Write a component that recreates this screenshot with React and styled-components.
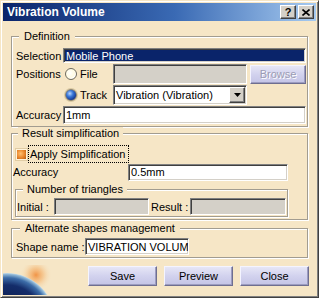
import React from "react";
import styled, { createGlobalStyle } from "styled-components";

const BEIGE = "#f6e6c6";

const GlobalStyle = createGlobalStyle`
  html, body { margin: 0; padding: 0; background: ${BEIGE}; }
  body {
    font-family: "Liberation Sans", Arial, sans-serif;
    font-size: 11px;
    color: #000;
  }
`;

const Window = styled.div`
  position: relative;
  width: 319px;
  height: 298px;
  box-sizing: border-box;
  border: 1px solid;
  border-color: ${BEIGE} #404040 #404040 ${BEIGE};
  box-shadow: inset 1px 1px 0 #fff, inset -1px -1px 0 #808080;
  padding: 2px;
  background: ${BEIGE};
  display: flex;
  flex-direction: column;
  overflow: hidden;
`;

const TitleBar = styled.div`
  height: 18px;
  flex: none;
  display: flex;
  align-items: center;
  padding: 0 2px 0 4px;
  background: linear-gradient(90deg, #0a246a 0%, #3a6ab4 55%, #a6caf0 100%);
  color: #fff;
  font-weight: bold;
  font-size: 12px;
`;

const TitleText = styled.span`
  flex: 1;
  white-space: nowrap;
`;

const CapButton = styled.div`
  box-sizing: border-box;
  width: 16px;
  height: 14px;
  margin-left: ${(p) => (p.gap ? "2px" : "0")};
  background: #d4d0c8;
  border: 1px solid;
  border-color: #fff #404040 #404040 #fff;
  box-shadow: inset -1px -1px 0 #808080;
  display: flex;
  align-items: center;
  justify-content: center;
  color: #000;
  font-size: 11px;
  font-weight: bold;
  line-height: 1;
`;

const Body = styled.div`
  position: relative;
  z-index: 1;
  flex: 1;
  display: flex;
  flex-direction: column;
  padding: 9px 8px 0 8px;
`;

const Group = styled.fieldset`
  margin: ${(p) => p.m || "0"};
  padding: ${(p) => p.pad};
  border: 1px solid #a29c90;
  box-shadow: inset 1px 1px 0 #fff, 1px 1px 0 #fff;
  min-width: 0;
`;

const Legend = styled.legend`
  margin-left: ${(p) => p.indent}px;
  padding: 0 ${(p) => p.pad}px;
  line-height: 13px;
  height: 13px;
  background: ${BEIGE};
  white-space: nowrap;
`;

const DefGrid = styled.div`
  display: grid;
  grid-template-columns: 47px 1fr;
  grid-template-rows: 15px 20px 20px 18px;
  row-gap: 1px;
  align-items: center;
`;

const Label = styled.span`
  white-space: nowrap;
  padding-left: ${(p) => p.indent || 0}px;
  width: ${(p) => (p.w ? p.w + "px" : "auto")};
  flex: none;
`;

const Field = styled.div`
  box-sizing: border-box;
  height: ${(p) => p.h || 17}px;
  width: ${(p) => (p.w ? p.w + "px" : "auto")};
  flex: ${(p) => (p.w ? "none" : "1")};
  border: 1px solid;
  border-color: #808080 #fff #fff #808080;
  box-shadow: inset 1px 1px 0 #404040, inset -1px -1px 0 #d4d0c8;
  background: ${(p) =>
    p.tone === "selected" ? "#0a246a" : p.tone === "disabled" ? "#d4d0c8" : "#fff"};
  color: ${(p) => (p.tone === "selected" ? "#fff" : "#000")};
  padding: 0 2px;
  display: flex;
  align-items: center;
  white-space: nowrap;
  overflow: hidden;
  position: relative;
`;

const ChoiceRow = styled.div`
  display: flex;
  align-items: center;
  height: 100%;
`;

const RadioLabel = styled.label`
  box-sizing: border-box;
  width: 50px;
  flex: none;
  display: flex;
  align-items: center;
  gap: 3px;
  padding-left: 2px;
`;

const Radio = styled.span`
  box-sizing: border-box;
  width: 12px;
  height: 12px;
  border-radius: 50%;
  flex: none;
  border: 1px solid ${(p) => (p.on ? "#8a8270" : "#6e6a5e")};
  background: ${(p) =>
    p.on
      ? "radial-gradient(circle at 38% 35%, #b8d4ff 0%, #3a78d8 35%, #0c2c88 80%, #061850 100%)"
      : "radial-gradient(circle at 40% 40%, #ffffff 0%, #fffbe0 55%, #e8dcb0 100%)"};
  box-shadow: ${(p) => (p.on ? "0 0 0 1px #d8c8a0" : "inset -1px -1px 0 #fff")};
`;

const Combo = styled(Field)`
  padding-right: 20px;
`;

const DropButton = styled.span`
  position: absolute;
  right: 1px;
  top: 1px;
  bottom: 1px;
  width: 16px;
  box-sizing: border-box;
  background: #d4d0c8;
  border: 1px solid;
  border-color: #fff #404040 #404040 #fff;
  box-shadow: inset -1px -1px 0 #808080;
  display: flex;
  align-items: center;
  justify-content: center;
`;

const LavButton = styled.div`
  box-sizing: border-box;
  width: ${(p) => p.w}px;
  height: ${(p) => p.h || 20}px;
  flex: none;
  display: flex;
  align-items: center;
  justify-content: center;
  background: linear-gradient(180deg, #e6e6f6 0%, #d2d2ee 50%, #c4c4e6 100%);
  border: 1px solid;
  border-color: #f4f4ff #6e6e90 #6e6e90 #f4f4ff;
  box-shadow: inset -1px -1px 0 #9c9cc0;
  color: ${(p) => (p.disabled ? "#9c9cb4" : "#000")};
  text-shadow: ${(p) => (p.disabled ? "1px 1px 0 #fff" : "none")};
  margin-left: ${(p) => p.ml || 0}px;
`;

const CheckRow = styled.div`
  display: flex;
  align-items: center;
  height: 18px;
  margin-left: 3px;
`;

const CheckBox = styled.span`
  box-sizing: border-box;
  width: 11px;
  height: 11px;
  flex: none;
  border: 1px solid #fff3dc;
  box-shadow: 0 0 0 1px #e0cca4;
  background: radial-gradient(circle at 40% 40%, #ffc070 0%, #ec8a30 50%, #b85c10 100%);
`;

const FocusLabel = styled.span`
  box-sizing: border-box;
  height: 18px;
  margin-left: 1px;
  padding: 0 3px 0 1px;
  border: 1px dotted #000;
  display: flex;
  align-items: center;
  white-space: nowrap;
`;

const SplitRow = styled.div`
  display: flex;
  align-items: center;
  justify-content: space-between;
  height: 18px;
`;

const CountGrid = styled.div`
  display: grid;
  grid-template-columns: 37px 95px 41px 96px;
  height: 17px;
  align-items: center;
`;

const ShapeRow = styled.div`
  display: flex;
  align-items: center;
  height: 17px;
`;

const ButtonBar = styled.div`
  display: flex;
  justify-content: flex-end;
  gap: 7px;
  margin: 8px -1px 0 0;
`;

const Globe = styled.svg`
  position: absolute;
  left: 2px;
  bottom: 2px;
  z-index: 0;
`;

export default function App() {
  return (
    <>
      <GlobalStyle />
      <Window>
        <TitleBar>
          <TitleText>Vibration Volume</TitleText>
          <CapButton>?</CapButton>
          <CapButton gap>
            <svg width="8" height="7" viewBox="0 0 8 7">
              <path d="M0.5 0.5 L7.5 6.5 M7.5 0.5 L0.5 6.5" stroke="#000" strokeWidth="1.6" />
            </svg>
          </CapButton>
        </TitleBar>

        <Body>
          <Group pad="5px 1px 2px 4px">
            <Legend indent={3} pad={5}>Definition</Legend>
            <DefGrid>
              <Label>Selection</Label>
              <Field h={15} tone="selected">Mobile Phone</Field>

              <Label>Positions</Label>
              <ChoiceRow>
                <RadioLabel>
                  <Radio />
                  File
                </RadioLabel>
                <Field h={20} w={134} tone="disabled" />
                <LavButton w={56} h={19} ml={3} disabled>
                  Browse
                </LavButton>
              </ChoiceRow>

              <span />
              <ChoiceRow>
                <RadioLabel>
                  <Radio on />
                  Track
                </RadioLabel>
                <Combo h={20} w={134}>
                  Vibration (Vibration)
                  <DropButton>
                    <svg width="7" height="4" viewBox="0 0 7 4">
                      <path d="M0 0 H7 L3.5 4 Z" fill="#000" />
                    </svg>
                  </DropButton>
                </Combo>
              </ChoiceRow>

              <Label>Accuracy</Label>
              <Field h={18}>1mm</Field>
            </DefGrid>
          </Group>

          <Group pad="5px 19px 2px 1px">
            <Legend indent={5} pad={4}>Result simplification</Legend>
            <CheckRow>
              <CheckBox />
              <FocusLabel>Apply Simplification</FocusLabel>
            </CheckRow>
            <SplitRow>
              <Label>Accuracy</Label>
              <Field w={160} h={17}>0.5mm</Field>
            </SplitRow>
            <Group pad="2px 1px 1px 1px" m="2px 0 0 2px">
              <Legend indent={6} pad={4}>Number of triangles</Legend>
              <CountGrid>
                <Label>Initial :</Label>
                <Field h={17} tone="disabled" />
                <Label indent={2}>Result :</Label>
                <Field h={17} tone="disabled" />
              </CountGrid>
            </Group>
          </Group>

          <Group pad="3px 1px 2px 4px" m="2px 0 0 0">
            <Legend indent={4} pad={5}>Alternate shapes management</Legend>
            <ShapeRow>
              <Label w={69}>Shape name :</Label>
              <Field w={104} h={17}>VIBRATION VOLUME</Field>
            </ShapeRow>
          </Group>

          <ButtonBar>
            <LavButton w={69}>Save</LavButton>
            <LavButton w={69}>Preview</LavButton>
            <LavButton w={69}>Close</LavButton>
          </ButtonBar>
        </Body>

        <Globe width="56" height="30" viewBox="0 0 56 30">
          <defs>
            <radialGradient id="glow" cx="33" cy="10" r="16" gradientUnits="userSpaceOnUse">
              <stop offset="0" stopColor="#f09040" stopOpacity="0.95" />
              <stop offset="0.45" stopColor="#f4b068" stopOpacity="0.55" />
              <stop offset="1" stopColor="#f6e6c6" stopOpacity="0" />
            </radialGradient>
            <radialGradient id="earth" cx="4" cy="56" r="48" gradientUnits="userSpaceOnUse">
              <stop offset="0" stopColor="#081438" />
              <stop offset="0.75" stopColor="#142c6a" />
              <stop offset="0.9" stopColor="#3c6ca8" />
              <stop offset="0.97" stopColor="#8cb4d4" />
              <stop offset="1" stopColor="#c4dcea" />
            </radialGradient>
          </defs>
          <circle cx="33" cy="10" r="16" fill="url(#glow)" />
          <circle cx="4" cy="56" r="48" fill="url(#earth)" />
        </Globe>
      </Window>
    </>
  );
}
